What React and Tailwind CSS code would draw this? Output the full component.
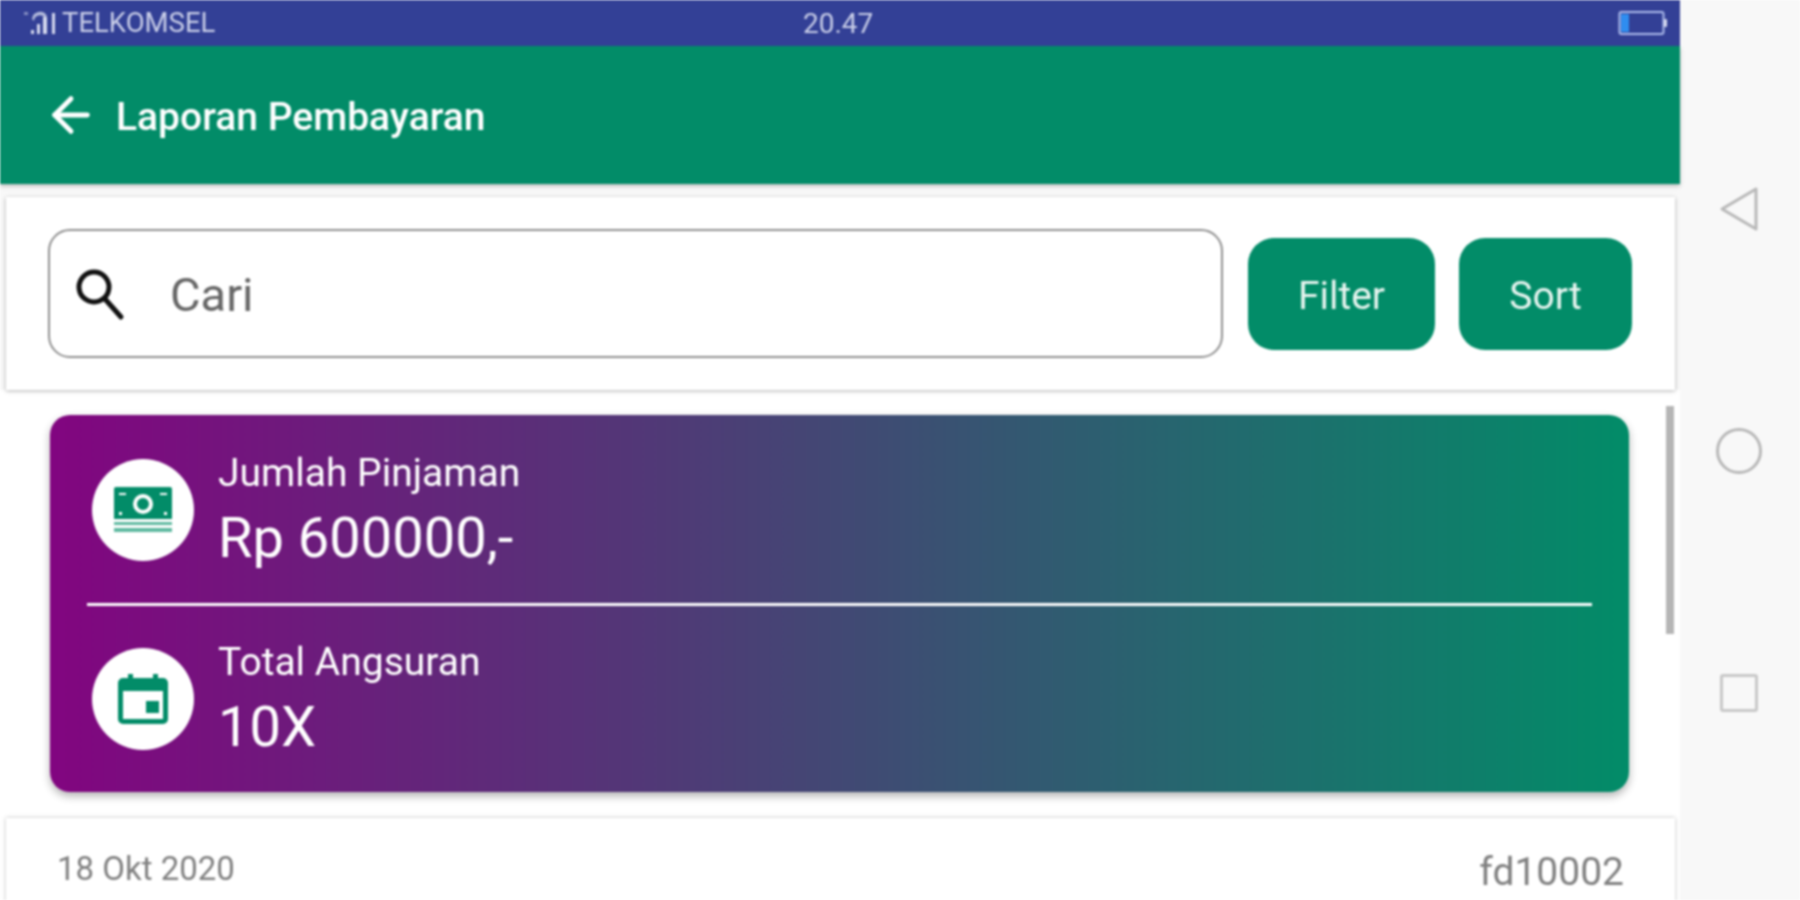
import React from "react";
import { ArrowLeft } from "lucide-react";

// status bar signal bars
const Signal = () => (
  <svg width="36" height="24" viewBox="0 0 36 24" fill="#d5d9ee">
    <rect x="0" y="1" width="4" height="3" opacity="0.5" />
    <rect x="7" y="19" width="3" height="4" />
    <rect x="13" y="13" width="3" height="10" />
    <rect x="19" y="6" width="4" height="17" />
    <path d="M8 8 a8 8 0 0 1 15 -3 l-2 2 a6 6 0 0 0 -11 3z" opacity="0.8" />
    <rect x="28" y="2" width="3" height="21" />
  </svg>
);

const Battery = () => (
  <svg width="50" height="28" viewBox="0 0 50 28" fill="none">
    <rect x="1.5" y="3" width="44" height="22" rx="2" stroke="#aebcec" strokeWidth="2" />
    <rect x="3" y="5" width="8" height="18" fill="#2f8df0" />
    <rect x="46" y="10" width="3" height="8" rx="1" fill="#d5d9ee" />
  </svg>
);

const SearchIcon = () => (
  <svg width="52" height="56" viewBox="0 0 52 56" fill="none" stroke="#111" strokeWidth="5">
    <circle cx="20" cy="21" r="15" />
    <path d="M31 33 L47 51" strokeLinecap="round" />
  </svg>
);

const MoneyIcon = () => (
  <svg width="58" height="46" viewBox="0 0 58 46">
    <path
      fill="#028c68"
      fillRule="evenodd"
      d="M2 0h54a2 2 0 0 1 2 2v30H0V2a2 2 0 0 1 2-2z M29 7a10 10 0 1 0 0 20a10 10 0 0 0 0-20z M29 11a6 6 0 1 1 0 12a6 6 0 0 1 0-12z"
    />
    <rect x="5" y="6" width="7" height="2" fill="#fff" />
    <rect x="46" y="6" width="7" height="2" fill="#fff" />
    <rect x="5" y="25" width="3" height="3" fill="#fff" />
    <rect x="50" y="25" width="3" height="3" fill="#fff" />
    <rect x="0" y="35" width="58" height="3" fill="#5fb9a0" />
    <rect x="0" y="41" width="58" height="4" fill="#5fb9a0" />
  </svg>
);

const CalendarIcon = () => (
  <svg width="50" height="50" viewBox="0 0 50 50">
    <path
      fill="#028c68"
      fillRule="evenodd"
      d="M10 0h5v4h20V0h5v4h5a5 5 0 0 1 5 5v36a5 5 0 0 1-5 5H5a5 5 0 0 1-5-5V9a5 5 0 0 1 5-5h5z M5 17v28h40V17z"
    />
    <rect x="28" y="27" width="13" height="12" fill="#028c68" />
  </svg>
);

const SummaryRow = ({ icon, label, value }) => (
  <div className="flex items-center gap-[24px]">
    <div className="flex h-[102px] w-[102px] items-center justify-center rounded-full bg-white">
      {icon}
    </div>
    <div className="flex flex-col text-white">
      <span className="text-[39px] leading-[46px]">{label}</span>
      <span className="mt-[10px] text-[56px] leading-[64px]">{value}</span>
    </div>
  </div>
);

export default function App() {
  return (
    <div className="flex h-[900px] w-[1800px] overflow-hidden bg-[#f8f8f8] font-[Roboto,sans-serif] blur-[0.9px]">
      <div className="relative flex w-[1680px] flex-col">
        {/* status bar */}
        <div className="relative flex h-[46px] shrink-0 items-center justify-between bg-[#334096] pl-[24px] pr-[12px] text-[#c9cee8]">
          <div className="flex items-center gap-[2px] text-[27.5px]">
            <Signal />
            <span>TELKOMSEL</span>
          </div>
          <span className="absolute left-[803px] top-[8px] text-[28px] leading-[32px]">20.47</span>
          <Battery />
        </div>

        {/* header */}
        <div className="flex h-[138px] shrink-0 items-center gap-[17px] bg-[#028c68] pl-[43px] text-white shadow-[0_2px_4px_rgba(0,0,0,0.25)]">
          <ArrowLeft size={56} strokeWidth={2.1} />
          <span className="pt-[4px] text-[39px] font-medium">Laporan Pembayaran</span>
        </div>

        {/* search card */}
        <div className="relative z-10 mx-[6px] mt-[13px] flex h-[193px] w-[1669px] shrink-0 items-center bg-white pl-[42px] pr-[42px] shadow-[0_1px_4px_rgba(0,0,0,0.3)]">
          <div className="flex h-[129px] w-[1175px] items-center rounded-[22px] border-2 border-[#8f8f8f] pl-[24px]">
            <SearchIcon />
            <span className="ml-[44px] pt-[4px] text-[47px] text-[#666]">Cari</span>
          </div>
          <button className="ml-[25px] h-[112px] w-[187px] rounded-[26px] bg-[#028c68] pt-[6px] text-[39px] text-[#e8f5f0]">
            Filter
          </button>
          <button className="ml-[24px] h-[112px] w-[173px] rounded-[26px] bg-[#028c68] pt-[6px] text-[39px] text-[#e8f5f0]">
            Sort
          </button>
        </div>

        {/* list */}
        <div className="flex-1 bg-white">
          <div className="ml-[50px] mr-[51px] mt-[25px] flex h-[377px] flex-col rounded-[20px] bg-linear-to-r/srgb from-[#820580] to-[#028c68] px-[37px] shadow-[0_4px_8px_rgba(0,0,0,0.3)]">
            <div className="ml-[5px] mt-[35px]">
              <SummaryRow icon={<MoneyIcon />} label="Jumlah Pinjaman" value="Rp 600000,-" />
            </div>
            <div className="mt-[33px] h-[3px] bg-white" />
            <div className="ml-[5px] mt-[33px]">
              <SummaryRow icon={<CalendarIcon />} label="Total Angsuran" value="10X" />
            </div>
          </div>

          <div className="ml-[6px] mt-[26px] flex h-[90px] w-[1669px] items-start justify-between bg-white pl-[51px] pr-[51px] pt-[30px] shadow-[0_0_4px_rgba(0,0,0,0.25)]">
            <span className="text-[33px] leading-[42px] text-[#808080]">18 Okt 2020</span>
            <span className="mt-[3px] text-[39px] leading-[42px] text-[#808080]">fd10002</span>
          </div>
        </div>

        {/* scrollbar thumb */}
        <div className="absolute left-[1666px] top-[406px] h-[228px] w-[8px] bg-[#b5b5b5]" />
      </div>

      {/* android nav buttons */}
      <div className="flex w-[120px] flex-col items-center gap-[198px] pr-[2px] pt-[186px]">
        <svg width="42" height="46" viewBox="0 0 42 46" fill="none" stroke="#b8b8b8" strokeWidth="3" strokeLinejoin="round">
          <path d="M38 3 V43 L4 23z" />
        </svg>
        <div className="-mt-[2px] h-[46px] w-[46px] rounded-full border-[3px] border-[#b8b8b8]" />
        <div className="mt-[2px] h-[38px] w-[38px] rounded-[3px] border-[3px] border-[#c8c8c8]" />
      </div>
    </div>
  );
}
